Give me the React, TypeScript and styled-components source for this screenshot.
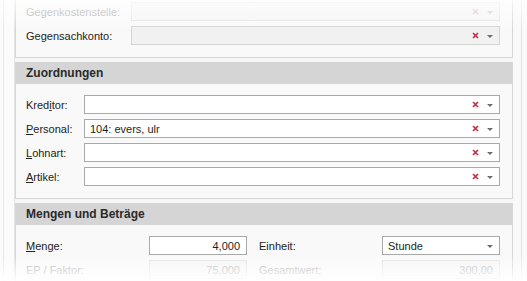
import React from 'react';
import styled, { createGlobalStyle } from 'styled-components';

const GlobalStyle = createGlobalStyle`
  html, body {
    margin: 0;
    padding: 0;
    background: #ffffff;
  }
  body {
    font-family: "Liberation Sans", Arial, sans-serif;
    font-size: 11px;
    color: #1e1e1e;
  }
`;

const Frame = styled.div`
  position: relative;
  width: 527px;
  height: 281px;
  overflow: hidden;
  background: #f6f6f6;
  display: flex;
`;

const Gutter = styled.div<{ $w: number }>`
  width: ${p => p.$w}px;
  flex: none;
  border-right: 1px solid #e6e6e6;
  background: #fbfbfb;
`;

const Column = styled.div`
  width: 498px;
  flex: none;
  display: flex;
  flex-direction: column;
  gap: 4px;
  margin-top: -7px;
`;

const RightSide = styled.div`
  flex: 1;
  display: flex;
  padding-left: 8px;
  background: #f9f9f9;
`;

const RightLine = styled.div`
  width: 1px;
  background: #e4e4e4;
`;

const Group = styled.section`
  background: #f9f9f9;
  border: 1px solid #d6d6d6;
  border-top: none;
`;

const Header = styled.h3`
  margin: 0;
  height: 22px;
  display: flex;
  align-items: center;
  padding-left: 10px;
  background: #d5d5d5;
  font-size: 12px;
  font-weight: bold;
  color: #2a2a2a;
`;

const Rows = styled.div<{ $top?: number }>`
  display: flex;
  flex-direction: column;
  gap: 5px;
  padding: ${p => p.$top ?? 11}px 12px 12px 10px;
`;

const Row = styled.div<{ $label: number }>`
  display: grid;
  grid-template-columns: ${p => p.$label}px 1fr;
  align-items: center;
  height: 19px;
`;

const SplitRow = styled.div`
  display: grid;
  grid-template-columns: 123px 98px 12px 123px 118px;
  align-items: center;
  height: 19px;
`;

const Label = styled.span<{ $disabled?: boolean }>`
  color: ${p => (p.$disabled ? '#a8a8a8' : '#222')};
  white-space: nowrap;
  u {
    text-decoration: underline;
    text-underline-offset: 1px;
  }
`;

const Box = styled.div<{ $tone?: 'normal' | 'readonly' | 'disabled'; $right?: boolean }>`
  box-sizing: border-box;
  height: 19px;
  display: flex;
  align-items: center;
  padding: 0 6px 0 5px;
  background: ${p => (p.$tone === 'disabled' ? '#f5f5f5' : p.$tone === 'readonly' ? '#f1f1f1' : '#ffffff')};
  border: 1px solid ${p => (p.$tone === 'disabled' ? '#e3e3e3' : p.$tone === 'readonly' ? '#d4d4d4' : '#a9a9a9')};
  color: ${p => (p.$tone === 'disabled' ? '#b0b0b0' : '#1e1e1e')};
  justify-content: ${p => (p.$right ? 'flex-end' : 'flex-start')};
`;

const Value = styled.span`
  flex: 1;
  white-space: nowrap;
`;

const Clear = styled.span<{ $disabled?: boolean }>`
  display: flex;
  margin-right: 8px;
  opacity: ${p => (p.$disabled ? 0.3 : 1)};
`;

const Arrow = styled.span<{ $disabled?: boolean }>`
  width: 0;
  height: 0;
  border-left: 3px solid transparent;
  border-right: 3px solid transparent;
  border-top: 3px solid ${p => (p.$disabled ? '#c8c8c8' : '#6e6e6e')};
  margin-top: 1px;
`;

const FadeTop = styled.div`
  position: absolute;
  left: 0;
  right: 0;
  top: 0;
  height: 30px;
  background: linear-gradient(to bottom, rgba(255,255,255,0.75), rgba(255,255,255,0));
  pointer-events: none;
`;

const FadeBottom = styled.div`
  position: absolute;
  left: 0;
  right: 0;
  bottom: 0;
  height: 26px;
  background: linear-gradient(to bottom, rgba(255,255,255,0), rgba(255,255,255,0.95));
  pointer-events: none;
`;

const ClearIcon = () => (
  <svg width="7" height="7" viewBox="0 0 7 7">
    <path d="M1 1 L6 6 M6 1 L1 6" stroke="#c8283f" strokeWidth="1.6" />
  </svg>
);

type ComboProps = {
  value?: string;
  tone?: 'normal' | 'readonly' | 'disabled';
  clear?: boolean;
};

const Combo: React.FC<ComboProps> = ({ value = '', tone = 'normal', clear = true }) => (
  <Box $tone={tone}>
    <Value>{value}</Value>
    {clear && (
      <Clear $disabled={tone === 'disabled'}>
        <ClearIcon />
      </Clear>
    )}
    <Arrow $disabled={tone === 'disabled'} />
  </Box>
);

const App: React.FC = () => (
  <>
    <GlobalStyle />
    <Frame>
      <Gutter $w={3} />
      <Gutter $w={10} />
      <Column>
        <Group>
          <Rows $top={9}>
            <Row $label={105}>
              <Label $disabled>Gegenkostenstelle:</Label>
              <Combo tone="disabled" />
            </Row>
            <Row $label={105}>
              <Label>Gegensachkonto:</Label>
              <Combo tone="readonly" />
            </Row>
          </Rows>
        </Group>
        <Group>
          <Header>Zuordnungen</Header>
          <Rows>
            <Row $label={58}>
              <Label>Kred<u>i</u>tor:</Label>
              <Combo />
            </Row>
            <Row $label={58}>
              <Label><u>P</u>ersonal:</Label>
              <Combo value="104: evers, ulr" />
            </Row>
            <Row $label={58}>
              <Label><u>L</u>ohnart:</Label>
              <Combo />
            </Row>
            <Row $label={58}>
              <Label><u>A</u>rtikel:</Label>
              <Combo />
            </Row>
          </Rows>
        </Group>
        <Group>
          <Header>Mengen und Beträge</Header>
          <Rows>
            <SplitRow>
              <Label><u>M</u>enge:</Label>
              <Box $right>4,000</Box>
              <span />
              <Label>Einheit:</Label>
              <Combo value="Stunde" clear={false} />
            </SplitRow>
            <SplitRow>
              <Label $disabled>EP / Faktor:</Label>
              <Box $tone="disabled" $right>75,000</Box>
              <span />
              <Label $disabled>Gesamtwert:</Label>
              <Box $tone="disabled" $right>300,00</Box>
            </SplitRow>
          </Rows>
        </Group>
      </Column>
      <RightSide>
        <RightLine />
      </RightSide>
      <FadeTop />
      <FadeBottom />
    </Frame>
  </>
);

export default App;
